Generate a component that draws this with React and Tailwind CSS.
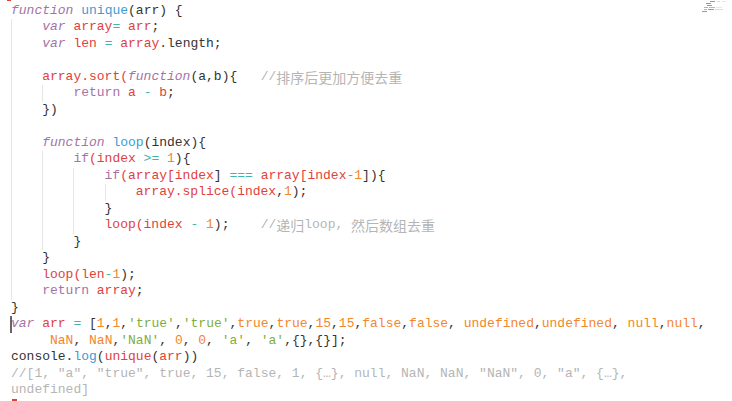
const C = {
    k: 'text-[#a672a6] italic',
    kn: 'text-[#a672a6]',
    f: 'text-[#3d9ad6]',
    v: 'text-[#e0413c]',
    n: 'text-[#f3862a]',
    s: 'text-[#7fae3c]',
    o: 'text-[#45b3ad]',
    p: 'text-[#333333]',
    c: 'text-[#b5b5b5]',
}

// [indent levels, tokens, cursor]
const lines = [
    [0, [['function', 'k'], [' '], ['unique', 'f'], ['('], ['arr'], [') {']]],
    [1, [['var', 'k'], [' '], ['array', 'v'], ['=', 'o'], [' '], ['arr', 'v'], [';']]],
    [1, [['var', 'k'], [' '], ['len', 'v'], [' '], ['=', 'o'], [' '], ['array', 'v'], ['.length;']]],
    [1, []],
    [1, [['array.sort(', 'v'], ['function', 'k'], ['(a,b){'], ['   '], ['//排序后更加方便去重', 'c']]],
    [2, [['return', 'kn'], [' '], ['a', 'v'], [' '], ['-', 'o'], [' '], ['b', 'v'], [';']]],
    [1, [['})']]],
    [1, []],
    [1, [['function', 'k'], [' '], ['loop', 'f'], ['(index){']]],
    [2, [['if', 'kn'], ['(index', 'v'], [' '], ['>=', 'o'], [' '], ['1', 'n'], ['){']]],
    [3, [['if', 'kn'], ['(array[index', 'v'], [']'], [' '], ['===', 'o'], [' '], ['array[index', 'v'], ['-', 'o'], ['1', 'n'], [']){']]],
    [4, [['array.splice(index', 'v'], [','], ['1', 'n'], [');']]],
    [3, [['}']]],
    [3, [['loop(index', 'v'], [' '], ['-', 'o'], [' '], ['1', 'n'], [');'], ['    '], ['//递归loop, 然后数组去重', 'c']]],
    [2, [['}']]],
    [1, [['}']]],
    [1, [['loop(len', 'v'], ['-', 'o'], ['1', 'n'], [');']]],
    [1, [['return', 'kn'], [' '], ['array', 'v'], [';']]],
    [0, [['}']]],
    [0, [['var', 'k'], [' '], ['arr', 'v'], [' '], ['=', 'o'], [' ['], ['1', 'n'], [','], ['1', 'n'], [','], ["'true'", 's'], [','], ["'true'", 's'], [','], ['true', 'n'], [','], ['true', 'n'], [','], ['15', 'n'], [','], ['15', 'n'], [','], ['false', 'n'], [','], ['false', 'n'], [', '], ['undefined', 'n'], [','], ['undefined', 'n'], [', '], ['null', 'n'], [','], ['null', 'n'], [',']], true],
    [0, [['     '], ['NaN', 'n'], [', '], ['NaN', 'n'], [','], ["'NaN'", 's'], [', '], ['0', 'n'], [', '], ['0', 'n'], [', '], ["'a'", 's'], [', '], ["'a'", 's'], [',{},{}];']]],
    [0, [['console.'], ['log', 'f'], ['('], ['unique', 'v'], ['('], ['arr', 'v'], ['))']]],
    [0, [['//[1, "a", "true", true, 15, false, 1, {…}, null, NaN, NaN, "NaN", 0, "a", {…},', 'c']]],
    [0, [['undefined]', 'c']]],
]

function Token({ text, type }) {
    const cjk = /[\u4e00-\u9fff]/.test(text)
    if (cjk) {
        // latin parts keep the mono width, han parts use the CJK face
        const parts = text.split(/([\u4e00-\u9fff]+)/).filter(Boolean)
        return parts.map((part, i) => (
            <span
                key={i}
                className={`${C[type || 'p']} ${/[\u4e00-\u9fff]/.test(part) ? "font-['Noto_Sans_CJK_SC',sans-serif] text-[14px]" : ''}`}
            >
                {part}
            </span>
        ))
    }
    return <span className={C[type || 'p']}>{text}</span>
}

function CodeLine({ indent, tokens, cursor }) {
    return (
        <div className="relative flex h-[16.5px] items-center whitespace-pre">
            {cursor && <span className="absolute left-[-1px] top-[0px] h-[17px] w-[1.5px] bg-[#666]" />}
            {Array.from({ length: indent }).map((_, i) => (
                <span key={i} className="h-full w-[31.2px] shrink-0 border-l border-[#e6e6e6]" />
            ))}
            {tokens.map(([text, type], i) => (
                <Token key={i} text={text} type={type} />
            ))}
        </div>
    )
}

function Minimap() {
    return (
        <div className="absolute right-[6px] top-[1px] flex w-[24px] flex-col gap-[1px] opacity-70">
            <div className="ml-[8px] flex gap-[2px]">
                <span className="h-[1px] w-[6px] bg-[#e0413c]" />
                <span className="h-[1px] w-[3px] bg-[#ccc]" />
                <span className="h-[1px] w-[5px] bg-[#ddd]" />
            </div>
            <span className="ml-[4px] h-[1px] w-[5px] bg-[#e0413c]" />
            <span className="ml-[5px] h-[1px] w-[5px] bg-[#e0413c]" />
            <div className="ml-[2px] flex gap-[1px]">
                <span className="h-[1px] w-[4px] bg-[#7fae3c]" />
                <span className="h-[1px] w-[6px] bg-[#f3862a]" />
                <span className="h-[1px] w-[6px] bg-[#ddd]" />
            </div>
            <div className="ml-[2px] flex gap-[1px]">
                <span className="h-[1px] w-[3px] bg-[#999]" />
                <span className="h-[1px] w-[6px] bg-[#e0413c]" />
                <span className="h-[1px] w-[8px] bg-[#ccc]" />
            </div>
            <span className="h-[1px] w-[5px] bg-[#e0413c]" />
        </div>
    )
}

export default function App() {
    return (
        <div className="relative h-[401px] w-[732px] overflow-hidden bg-white">
            <span className="absolute left-[7px] top-0 h-[1px] w-[4px] bg-[#e0413c]" />
            <Minimap />
            <div className="pl-[11px] pt-[2.5px] font-['Liberation_Mono',monospace] text-[13px] leading-[16.5px]">
                {lines.map(([indent, tokens, cursor], i) => (
                    <CodeLine key={i} indent={indent} tokens={tokens} cursor={cursor} />
                ))}
            </div>
            <span className="absolute bottom-0 left-[12px] h-[2px] w-[5px] bg-[#e0413c]" />
        </div>
    )
}
